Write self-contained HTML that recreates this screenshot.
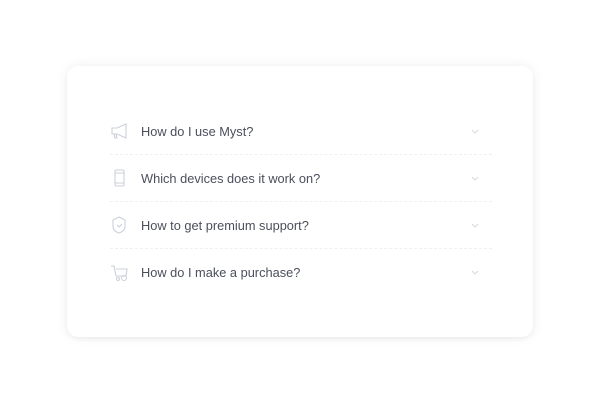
<!DOCTYPE html>
<html><head><style>
body{margin:0;width:600px;height:400px;background:#fff;font-family:"Liberation Sans",sans-serif;position:relative;overflow:hidden}
.card{position:absolute;left:67px;top:66px;width:466px;height:271px;border-radius:11px;background:#fff;box-shadow:0 0 12px rgba(0,0,0,0.07),0 2px 4px rgba(0,0,0,0.04)}
.row{position:absolute;left:110px;width:382px;height:47px}
.row .t{position:absolute;left:31px;top:2px;line-height:20px;font-size:12.8px;color:#4b4f5c;letter-spacing:0}
.row svg.i{position:absolute;left:0;top:2px}
.row .c{position:absolute;left:361px;top:9px}
.sep{position:absolute;left:110px;width:382px;border-top:1px dashed #eef0f3}
</style></head><body>
<div class="card"></div>
<div class="row" style="top:120px">
<svg class="i" width="20" height="18" viewBox="0 0 20 18" fill="none" stroke="#ccd0da" stroke-width="1.1"><path d="M2 6h5l9-4v14l-9-4H2z"/><path d="M4 12l1 4h2l-1-4"/></svg>
<span class="t">How do I use Myst?</span>
<svg class="c" width="8" height="6" viewBox="0 0 8 6" fill="none" stroke="#d5d9e2" stroke-width="1"><path d="M1 1l3 3 3-3"/></svg></div>
<div class="sep" style="top:154px"></div>
<div class="row" style="top:167px">
<svg class="i" width="20" height="20" viewBox="0 0 20 20" fill="none" stroke="#ccd0da" stroke-width="1.1"><rect x="5" y="1" width="9" height="16" rx="1.5"/><path d="M5 4h9M5 14h9"/></svg>
<span class="t">Which devices does it work on?</span>
<svg class="c" width="8" height="6" viewBox="0 0 8 6" fill="none" stroke="#d5d9e2" stroke-width="1"><path d="M1 1l3 3 3-3"/></svg></div>
<div class="sep" style="top:201px"></div>
<div class="row" style="top:214px">
<svg class="i" width="20" height="20" viewBox="0 0 20 20" fill="none" stroke="#ccd0da" stroke-width="1.1"><path d="M3 4l6-3 6 3v6c0 4-3 6-6 7-3-1-6-3-6-7z"/><path d="M7 9l2 2 3-3"/></svg>
<span class="t">How to get premium support?</span>
<svg class="c" width="8" height="6" viewBox="0 0 8 6" fill="none" stroke="#d5d9e2" stroke-width="1"><path d="M1 1l3 3 3-3"/></svg></div>
<div class="sep" style="top:248px"></div>
<div class="row" style="top:261px">
<svg class="i" width="20" height="20" viewBox="0 0 20 20" fill="none" stroke="#ccd0da" stroke-width="1.1"><path d="M1 3h3l2 10h10l1-7H6"/><circle cx="8" cy="16" r="1.5"/><circle cx="14" cy="15" r="2.5"/></svg>
<span class="t">How do I make a purchase?</span>
<svg class="c" width="8" height="6" viewBox="0 0 8 6" fill="none" stroke="#d5d9e2" stroke-width="1"><path d="M1 1l3 3 3-3"/></svg></div>
</body></html>
